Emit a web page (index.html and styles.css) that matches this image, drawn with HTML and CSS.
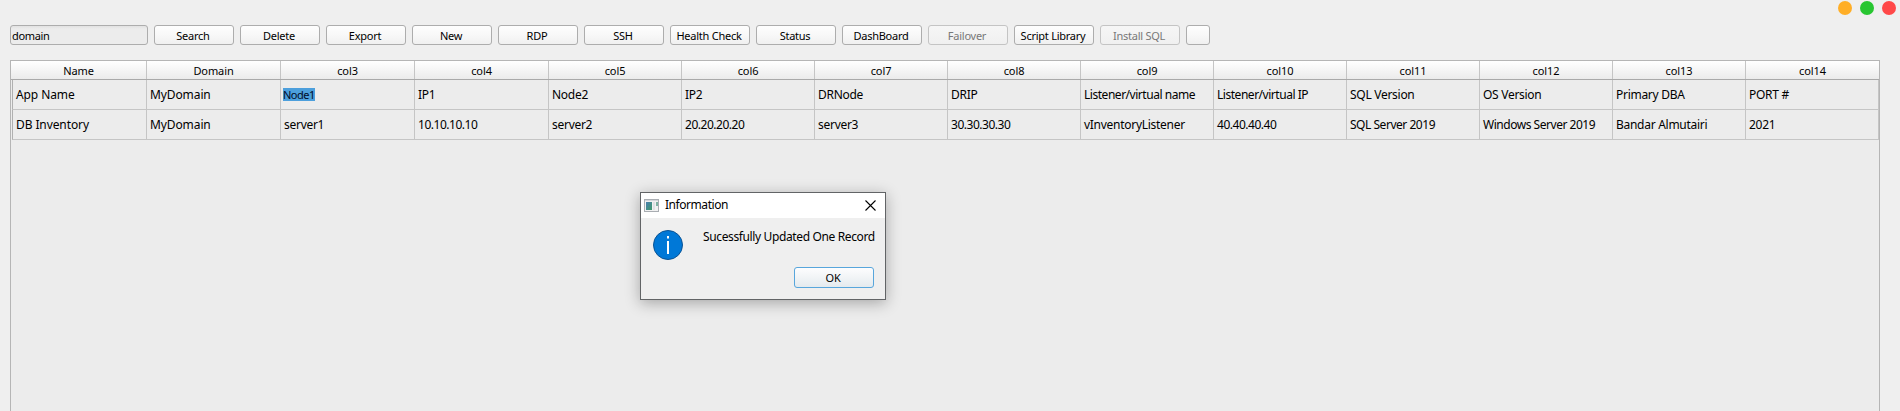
FILE: index.html
```html
<!DOCTYPE html>
<html lang="en">
<head>
<meta charset="utf-8">
<title>Inventory</title>
<link rel="stylesheet" href="styles.css">
</head>
<body>
<div class="window">
  <div class="controls"><i class="dot amber"></i><i class="dot green"></i><i class="dot red"></i></div>
  <div class="toolbar">
    <input class="search" type="text" value="domain">
    <button class="btn">Search</button>
    <button class="btn">Delete</button>
    <button class="btn">Export</button>
    <button class="btn">New</button>
    <button class="btn">RDP</button>
    <button class="btn">SSH</button>
    <button class="btn">Health Check</button>
    <button class="btn">Status</button>
    <button class="btn">DashBoard</button>
    <button class="btn" disabled>Failover</button>
    <button class="btn">Script Library</button>
    <button class="btn" disabled>Install SQL</button>
    <button class="btn small" aria-label="More"></button>
  </div>
  <div class="table">
    <div class="row head">
      <div>Name</div><div>Domain</div><div>col3</div><div>col4</div><div>col5</div><div>col6</div><div>col7</div><div>col8</div><div>col9</div><div>col10</div><div>col11</div><div>col12</div><div>col13</div><div>col14</div>
    </div>
    <div class="row">
      <div class="loose">App Name</div><div class="loose">MyDomain</div><div class="editing"><span class="selected">Node1</span></div><div>IP1</div><div>Node2</div><div>IP2</div><div>DRNode</div><div>DRIP</div><div class="tight">Listener/virtual name</div><div class="tight">Listener/virtual IP</div><div>SQL Version</div><div>OS Version</div><div>Primary DBA</div><div>PORT #</div>
    </div>
    <div class="row">
      <div class="loose">DB Inventory</div><div class="loose">MyDomain</div><div>server1</div><div class="tight">10.10.10.10</div><div>server2</div><div class="tight">20.20.20.20</div><div>server3</div><div class="tight">30.30.30.30</div><div>vInventoryListener</div><div class="tight">40.40.40.40</div><div class="tight">SQL Server 2019</div><div class="tight">Windows Server 2019</div><div>Bandar Almutairi</div><div>2021</div>
    </div>
  </div>
  <div class="dialog">
    <div class="titlebar">
      <svg class="app-icon" width="15" height="13" viewBox="0 0 15 13">
        <defs><linearGradient id="pane" x1="0" y1="0" x2="1" y2="1"><stop offset="0" stop-color="#4a7fb0"/><stop offset="1" stop-color="#3f9a6a"/></linearGradient></defs>
        <rect x=".5" y=".5" width="14" height="12" fill="#f1f1f1" stroke="#a9adb2"/>
        <rect x="1" y="1" width="13" height="1" fill="#d3d6da"/>
        <rect x="2" y="3" width="6" height="8" fill="url(#pane)"/>
        <rect x="9" y="3" width="2" height="8" fill="#dfe1e4"/>
        <rect x="12" y="3" width="2" height="4" fill="#7fb3a4"/>
      </svg>
      <span class="title">Information</span>
      <svg class="close" width="11" height="11" viewBox="0 0 11 11"><path d="M.5.5l10 10M10.500.5l-10 10" stroke="#000" stroke-width="1.100" fill="none"/></svg>
    </div>
    <div class="content">
      <svg class="info" width="30" height="30" viewBox="0 0 30 30">
        <circle cx="15" cy="15" r="14.500" fill="#0078d7" stroke="#0b5394"/>
        <rect x="14" y="6" width="2" height="2.500" fill="#fff"/>
        <rect x="14" y="11" width="2" height="13" fill="#fff"/>
      </svg>
      <span class="message">Sucessfully Updated One Record</span>
    </div>
    <div class="actions"><button class="btn ok">OK</button></div>
  </div>
</div>
</body>
</html>
```
FILE: styles.css
```css
* { box-sizing: border-box; }
body {
  margin: 0;
  background: #efefef;
  color: #000;
  font: 12px/16px "Noto Sans", "Open Sans", sans-serif;
  overflow: hidden;
}
.window {
  position: relative;
  height: 411px;
  display: flex;
  flex-direction: column;
  overflow: hidden;
}
.controls {
  display: flex;
  justify-content: flex-end;
  gap: 8px;
  height: 25px;
  flex: none;
  padding: 1px 4px 0 0;
}
.dot { width: 14px; height: 14px; border-radius: 50%; }
.amber { background: #ffae26; }
.green { background: #28c631; }
.red { background: #ff4848; }
.toolbar {
  display: flex;
  gap: 6px;
  height: 35px;
  flex: none;
  padding-left: 10px;
}
.search {
  width: 138px;
  height: 20px;
  padding: 1px 1px 0;
  border: 1px solid #adadad;
  border-radius: 3px;
  background: linear-gradient(#e2e2e2, #ececec 3px);
  color: #000;
  font: 11px/16px "Noto Sans", sans-serif;
  letter-spacing: -0.35px;
}
.btn {
  width: 80px;
  height: 20px;
  padding: 1px 2px 0 0;
  border: 1px solid #adadad;
  border-radius: 3px;
  background: linear-gradient(#fefefe, #f8f8f8 50%, #f0f0f0);
  color: #000;
  font: 11px/16px "Noto Sans", sans-serif;
  letter-spacing: -0.25px;
  white-space: nowrap;
}
.btn:disabled { color: #787878; border-color: #c4c4c4; background: linear-gradient(#f6f6f6, #f0f0f0); }
.small { width: 24px; }
.table {
  flex: 1;
  width: 1870px;
  margin-left: 10px;
  border: 1px solid #b5b5b5;
  border-bottom: 0;
  background: #ececec;
}
.row {
  display: grid;
  grid-template-columns: 136px 134px 134px 134px repeat(10, 133px);
  height: 30px;
}
.row > div {
  display: flex;
  align-items: center;
  padding: 1px 0 0 3px;
  border-right: 1px solid #c5c5c5;
  border-bottom: 1px solid #c5c5c5;
  letter-spacing: -0.28px;
  white-space: nowrap;
}
.row > .loose { letter-spacing: -0.1px; }
.row > .tight { letter-spacing: -0.47px; }
.row:not(.head) > div:first-child {
  margin-left: 1px;
  border-left: 1px solid #b0b0b0;
}
.head { height: 19px; background: linear-gradient(#fff, #f5f5f5 50%, #ebebeb); border-bottom: 1px solid #a9a9a9; }
.row.head > div {
  justify-content: center;
  padding: 2px 0 0;
  border-bottom: 0;
  font-size: 11px;
  letter-spacing: -0.1px;
}
.row.head > div:last-child { border-right: 0; }
.row > .editing { padding: 0 0 0 2px; }
.selected {
  height: 13px;
  background: #4c9fdc;
  font-size: 11px;
  line-height: 13px;
  letter-spacing: -0.5px;
  color: #000c28;
}
.dialog {
  position: absolute;
  left: 640px;
  top: 192px;
  width: 246px;
  height: 108px;
  border: 1px solid #626466;
  background: #efefef;
  box-shadow: 0 3px 14px rgba(0, 0, 0, .3);
}
.titlebar {
  display: flex;
  align-items: center;
  height: 25px;
  padding: 0 9px 1px 3px;
  background: #fff;
}
.title { margin-left: 6px; letter-spacing: -0.45px; }
.close { margin-left: auto; }
.content { display: flex; height: 49px; padding: 12px 0 0 12px; }
.message { margin: -1px 0 0 20px; letter-spacing: -0.37px; white-space: nowrap; }
.actions { display: flex; justify-content: flex-end; padding-right: 11px; }
.ok { height: 21px; border-color: #58a6dc; background: linear-gradient(#fdfdfe, #f1f4f6 50%, #e4eaee); }
```
